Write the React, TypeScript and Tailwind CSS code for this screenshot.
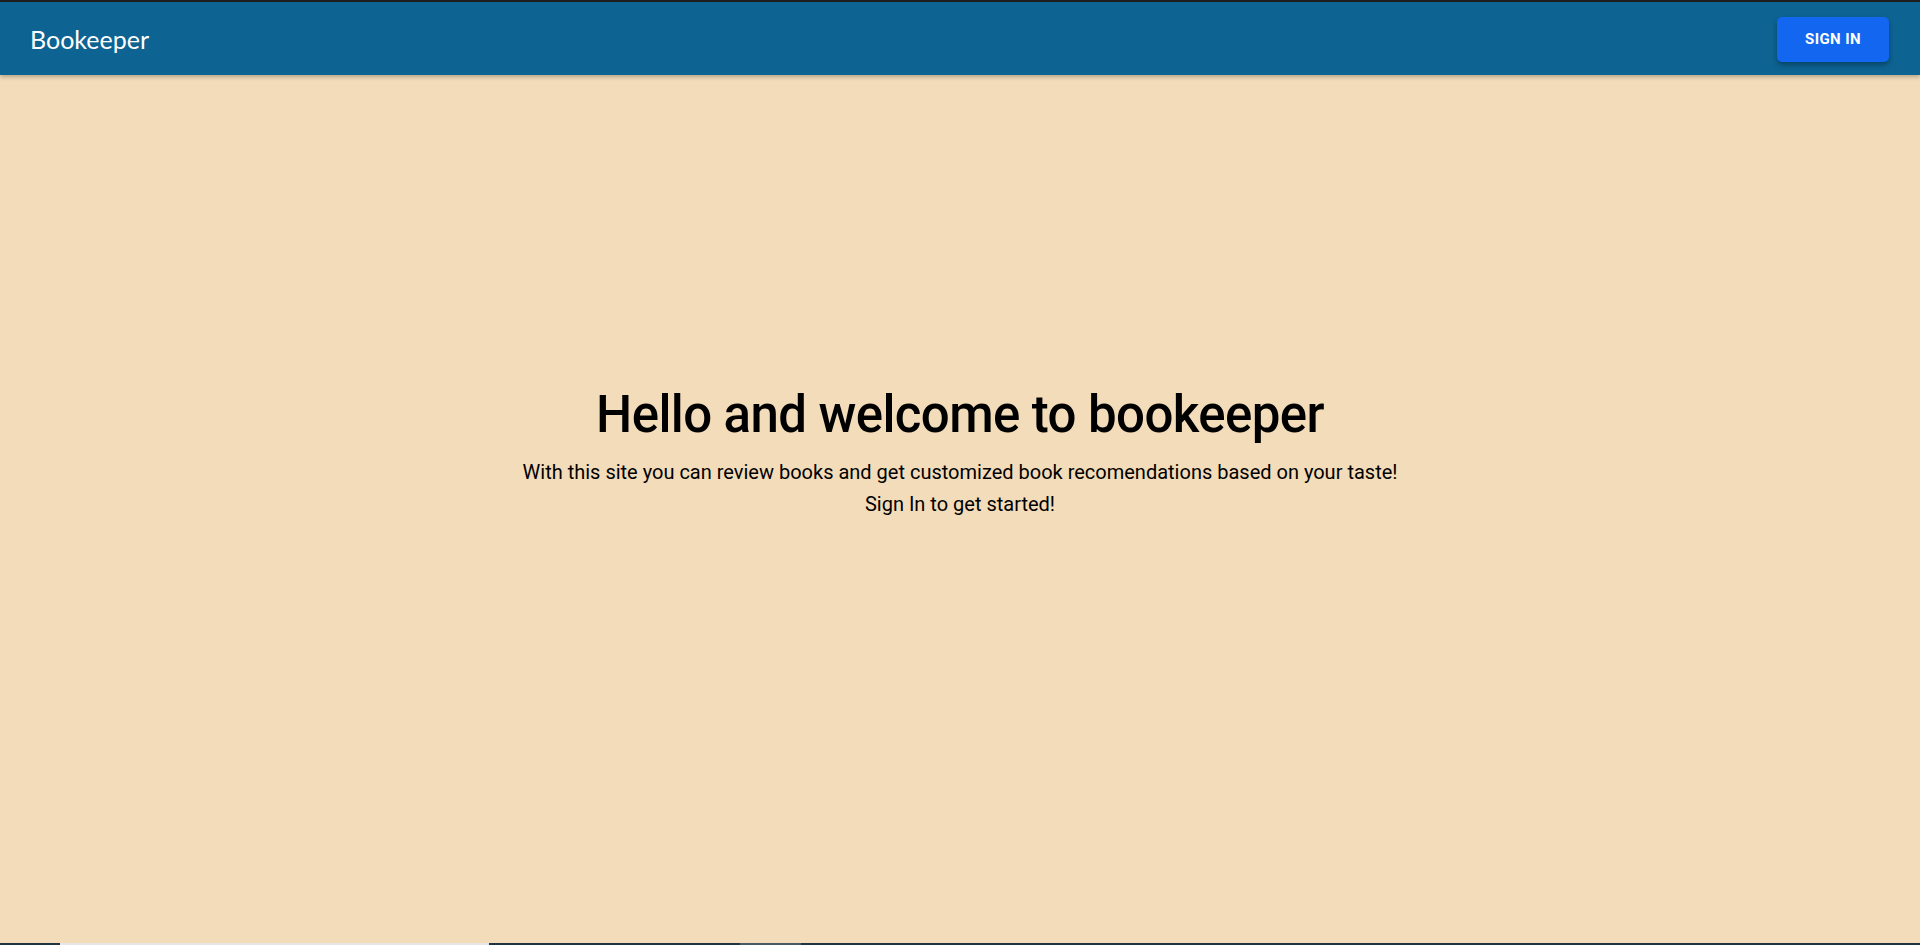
const App = () => {
  return (
    <div className="flex min-h-[945px] flex-col bg-[#f3dcba]">
      <div className="h-[2px] bg-[#1e1e1e]" />
      <header className="z-10 flex h-[73px] items-center justify-between bg-[#0d6391] pt-[2px] pl-[30px] pr-[31px] shadow-[0_2px_4px_rgba(0,0,0,0.25)]">
        <div className="font-['Lato',sans-serif] text-[25px] leading-none text-white">Bookeeper</div>
        <button className="flex h-[45px] w-[112px] items-center justify-center rounded-[5px] bg-[#1366f0] font-['Roboto',sans-serif] text-[15px] font-bold uppercase tracking-[0.4px] text-white shadow-[0_3px_5px_rgba(0,0,0,0.3)]">
          Sign In
        </button>
      </header>

      <main className="flex flex-1 flex-col items-center pt-[309px] font-['Roboto',sans-serif] text-black">
        <h1 className="text-[51px] leading-[62px] font-medium tracking-[-0.6px]">Hello and welcome to bookeeper</h1>
        <p className="mt-[10px] text-center text-[20px] leading-[32px]">
          With this site you can review books and get customized book recomendations based on your taste!
          <br />
          Sign In to get started!
        </p>
      </main>

      <div className="flex h-[2px] bg-[#1f3440]">
        <div className="w-[60px]" />
        <div className="w-[429px] bg-[#e6e6e6]" />
        <div className="w-[251px]" />
        <div className="w-[61px] bg-[#4a5a63]" />
      </div>
    </div>
  );
};

export default App;
